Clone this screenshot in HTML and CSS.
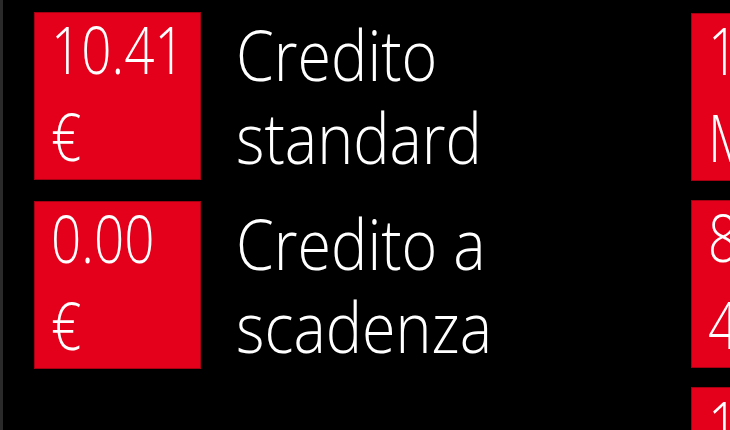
FILE: index.html
```html
<!DOCTYPE html>
<html lang="it">
<head>
<meta charset="utf-8">
<title>Credito</title>
<link rel="stylesheet" href="styles.css">
</head>
<body>
<div class="page">
  <div class="column column-main">
    <div class="item">
      <div class="tile">
        <div class="tile-text">
          <span class="amount">10.41</span>
          <span class="unit">€</span>
        </div>
      </div>
      <div class="label">
        <span class="line">Credito</span>
        <span class="line">standard</span>
      </div>
    </div>
    <div class="item">
      <div class="tile">
        <div class="tile-text">
          <span class="amount">0.00</span>
          <span class="unit">€</span>
        </div>
      </div>
      <div class="label">
        <span class="line">Credito a</span>
        <span class="line">scadenza</span>
      </div>
    </div>
  </div>
  <div class="column column-side">
    <div class="item">
      <div class="tile">
        <div class="tile-text">
          <span class="amount">1</span>
          <span class="unit">M</span>
        </div>
      </div>
    </div>
    <div class="item">
      <div class="tile">
        <div class="tile-text">
          <span class="amount">8</span>
          <span class="unit">4</span>
        </div>
      </div>
    </div>
    <div class="item">
      <div class="tile">
        <div class="tile-text">
          <span class="amount">1</span>
          <span class="unit">€</span>
        </div>
      </div>
    </div>
  </div>
</div>
</body>
</html>
```

FILE: styles.css
```css
html, body {
  margin: 0;
  padding: 0;
  background: #000;
  width: 730px;
  height: 430px;
  overflow: hidden;
}

body {
  border-left: 3px solid #2a2a2a;
  box-sizing: border-box;
  font-family: "Open Sans", "Noto Sans", "Liberation Sans", sans-serif;
  font-weight: 360;
  color: #fff;
}

.page {
  display: flex;
  padding: 12px 0 0 31px;
}

.column {
  display: flex;
  flex-direction: column;
  gap: 21px;
  flex-shrink: 0;
}

.column-main {
  width: 657px;
}

.column-side {
  gap: 19px;
  padding-top: 1px;
}

.item {
  display: flex;
  align-items: flex-start;
}

.tile {
  width: 167px;
  height: 168px;
  box-sizing: border-box;
  background: #e4001b;
  box-shadow: inset 0 0 0 1px #a40012;
  padding: 0 0 0 17px;
  flex-shrink: 0;
  white-space: nowrap;
}

.tile-text {
  font-size: 53px;
  line-height: 70px;
  transform: translateY(-6px) scaleY(1.24);
  transform-origin: left top;
}

.amount,
.unit {
  display: block;
}

.label {
  margin: 1px 0 0 35px;
  white-space: nowrap;
  font-size: 61px;
  line-height: 72px;
  transform: scaleY(1.15);
  transform-origin: left top;
}

.line {
  display: block;
}
```
